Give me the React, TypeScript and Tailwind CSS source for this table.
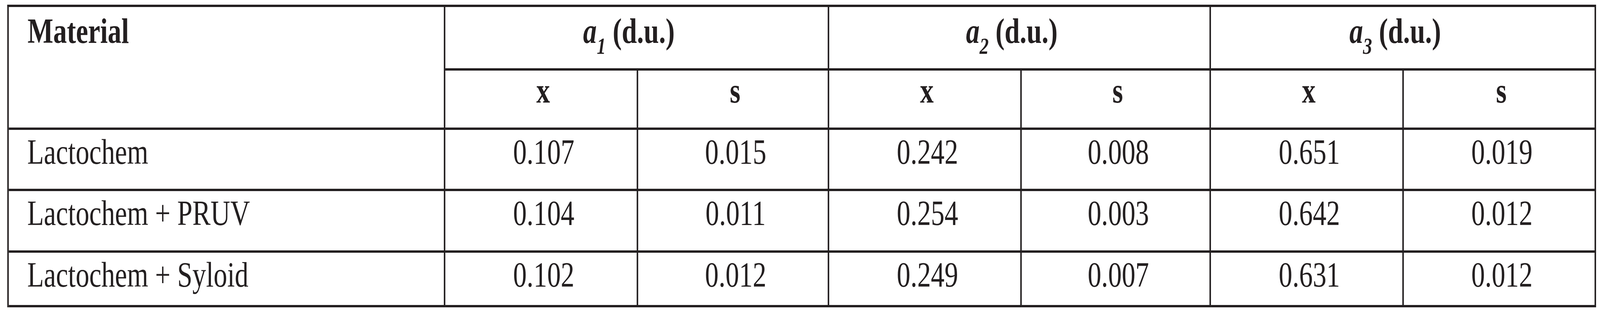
import React from "react"

type Row = { name: string; values: string[] }

const rows: Row[] = [
  { name: "Lactochem", values: ["0.107", "0.015", "0.242", "0.008", "0.651", "0.019"] },
  { name: "Lactochem + PRUV", values: ["0.104", "0.011", "0.254", "0.003", "0.642", "0.012"] },
  { name: "Lactochem + Syloid", values: ["0.102", "0.012", "0.249", "0.007", "0.631", "0.012"] },
]

const cell = "border-r-[5px] border-b-[6px] border-[#231f20]"

function GroupHead({ n }: { n: string }) {
  return (
    <div className={`${cell} col-span-2 pt-[17px] pr-[50px] text-center font-bold`}>
      <i>a</i>
      <i className="text-[60px] align-[-28px]">{n}</i> (d.u.)
    </div>
  )
}

export default function App() {
  // the table is drawn for a 5285px page; squeeze it if the window is narrower
  const sx = typeof window === "undefined" ? 1 : Math.min(1, window.innerWidth / 5285)

  return (
    <div className="h-[800px] w-full overflow-hidden bg-white">
      <div
        className="h-[800px] w-[5285px] origin-top-left pt-[12px] pl-[24px] text-[90px] leading-[90px] text-[#231f20]"
        style={{ fontFamily: '"Liberation Serif", "Times New Roman", serif', transform: `scaleX(${sx})` }}
      >
        <div className="grid w-[5248px] grid-cols-[1442px_637px_631px_636px_625px_637px_635px] grid-rows-[163px_152px_157px_158px_140px] border-t-[6px] border-l-[5px] border-[#231f20]">
          <div className={`${cell} row-span-2 pt-[17px] pl-[62px] font-bold`}>Material</div>
          <GroupHead n="1" />
          <GroupHead n="2" />
          <GroupHead n="3" />

          {["x", "s", "x", "s", "x", "s"].map((h, i) => (
            <div key={i} className={`${cell} pt-[7px] pl-[14px] text-center font-bold`}>
              {h}
            </div>
          ))}

          {rows.map((r) => (
            <React.Fragment key={r.name}>
              <div className={`${cell} pt-[12px] pl-[61px]`}>{r.name}</div>
              {r.values.map((v, i) => (
                <div key={i} className={`${cell} pt-[12px] pl-[18px] text-center`}>
                  {v}
                </div>
              ))}
            </React.Fragment>
          ))}
        </div>
      </div>
    </div>
  )
}
